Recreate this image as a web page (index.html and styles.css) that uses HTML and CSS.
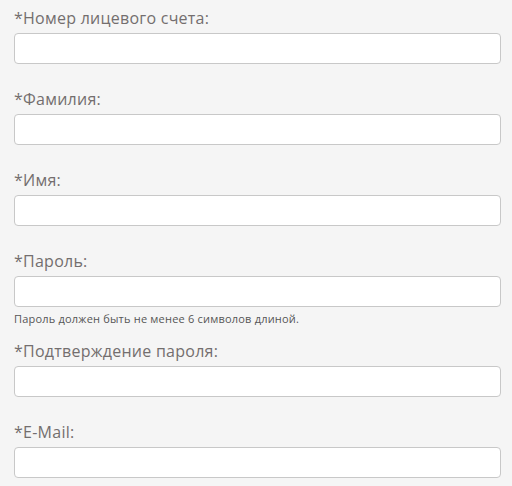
FILE: index.html
```html
<!DOCTYPE html>
<html lang="ru">
<head>
    <meta charset="UTF-8">
    <meta name="viewport" content="width=device-width, initial-scale=1.0">
    <title>Регистрация</title>
    <link rel="stylesheet" href="styles.css">
</head>
<body>
    <!-- Registration form fields -->
    <form class="reg-form">
        <div class="field">
            <label for="account">*Номер лицевого счета:</label>
            <input type="text" id="account">
        </div>

        <div class="field">
            <label for="lastname">*Фамилия:</label>
            <input type="text" id="lastname">
        </div>

        <div class="field">
            <label for="firstname">*Имя:</label>
            <input type="text" id="firstname">
        </div>

        <div class="field">
            <label for="password">*Пароль:</label>
            <input type="password" id="password">
            <div class="hint">Пароль должен быть не менее 6 символов длиной.</div>
        </div>

        <div class="field">
            <label for="password2">*Подтверждение пароля:</label>
            <input type="password" id="password2">
        </div>

        <div class="field">
            <label for="email">*E-Mail:</label>
            <input type="text" id="email">
        </div>
    </form>
</body>
</html>
```

FILE: styles.css
```css
/* General styling */
body {
    font-family: 'Open Sans', 'Liberation Sans', sans-serif;
    background-color: #f5f5f5;
    margin: 0;
    padding: 8px 11px 0 14px;
}

.reg-form {
    display: flex;
    flex-direction: column;
    gap: 25px;
}

.field {
    display: flex;
    flex-direction: column;
}

.field label {
    font-size: 16px;
    line-height: 20px;
    letter-spacing: 0.25px;
    color: #736e6e;
    margin-bottom: 5px;
}

.field input {
    box-sizing: border-box;
    height: 31px;
    width: 100%;
    margin: 0;
    border: 1px solid #c8c8c8;
    border-radius: 4px;
    background-color: #fff;
    outline: none;
}

.hint {
    font-size: 11px;
    line-height: 14px;
    letter-spacing: 0.2px;
    color: #555;
    margin-top: 5px;
    margin-bottom: -10px;
}
```
